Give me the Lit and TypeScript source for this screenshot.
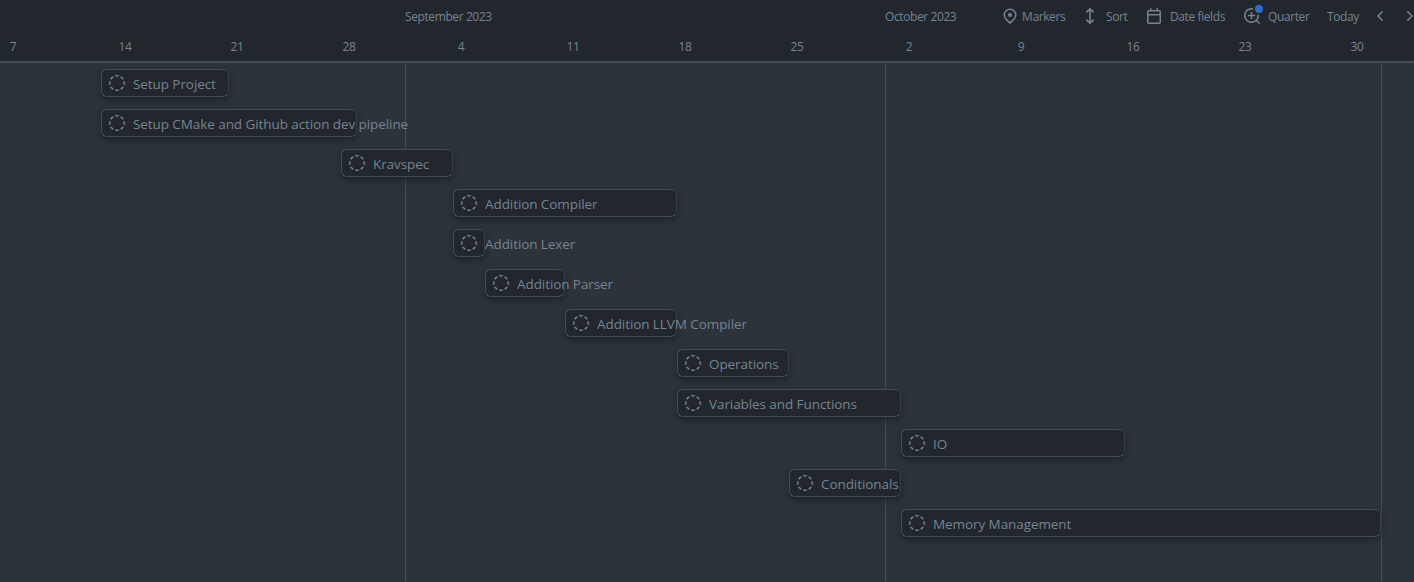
import { LitElement, html, svg, css } from "lit";
import { customElement, property } from "lit/decorators.js";

/** First day shown is Monday 7 August; every day is one 16px grid column. */
const WEEKS = [7, 14, 21, 28, 4, 11, 18, 25, 2, 9, 16, 23, 30];
const MONTH_STARTS = [26, 56, 87];
const MONTHS = [
  { name: "September 2023", column: 26 },
  { name: "October 2023", column: 56 },
];
const ITEMS = [
  { title: "Setup Project", start: 7, days: 8 },
  { title: "Setup CMake and Github action dev pipeline", start: 7, days: 16 },
  { title: "Kravspec", start: 22, days: 7 },
  { title: "Addition Compiler", start: 29, days: 14 },
  { title: "Addition Lexer", start: 29, days: 2 },
  { title: "Addition Parser", start: 31, days: 5 },
  { title: "Addition LLVM Compiler", start: 36, days: 7 },
  { title: "Operations", start: 43, days: 7 },
  { title: "Variables and Functions", start: 43, days: 14 },
  { title: "IO", start: 57, days: 14 },
  { title: "Conditionals", start: 50, days: 7 },
  { title: "Memory Management", start: 57, days: 30 },
];

const ICONS: Record<string, unknown> = {
  draft: svg`<path d="M14.307 11.655a.75.75 0 0 1 .165 1.048 8.05 8.05 0 0 1-1.769 1.77.75.75 0 0 1-.883-1.214 6.552 6.552 0 0 0 1.44-1.439.75.75 0 0 1 1.047-.165Zm-2.652-9.962a.75.75 0 0 1 1.048-.165 8.05 8.05 0 0 1 1.77 1.769.75.75 0 0 1-1.214.883 6.552 6.552 0 0 0-1.439-1.44.75.75 0 0 1-.165-1.047ZM6.749.097a8.074 8.074 0 0 1 2.502 0 .75.75 0 1 1-.233 1.482 6.558 6.558 0 0 0-2.036 0A.751.751 0 0 1 6.749.097ZM.955 6.125a.75.75 0 0 1 .624.857 6.558 6.558 0 0 0 0 2.036.75.75 0 1 1-1.482.233 8.074 8.074 0 0 1 0-2.502.75.75 0 0 1 .858-.624Zm14.09 0a.75.75 0 0 1 .858.624c.13.829.13 1.673 0 2.502a.75.75 0 1 1-1.482-.233 6.558 6.558 0 0 0 0-2.036.75.75 0 0 1 .624-.857Zm-13.352 5.53a.75.75 0 0 1 1.048.165 6.552 6.552 0 0 0 1.439 1.44.75.75 0 0 1-.883 1.212 8.05 8.05 0 0 1-1.77-1.769.75.75 0 0 1 .166-1.048Zm2.652-9.962A.75.75 0 0 1 4.18 2.74a6.556 6.556 0 0 0-1.44 1.44.751.751 0 0 1-1.212-.883 8.05 8.05 0 0 1 1.769-1.77.75.75 0 0 1 1.048.166Zm1.78 13.352a.75.75 0 0 1 .857-.624 6.558 6.558 0 0 0 2.036 0 .75.75 0 1 1 .233 1.482 8.074 8.074 0 0 1-2.502 0 .75.75 0 0 1-.624-.858Z"/>`,
  pin: svg`<path d="m12.596 11.596-3.535 3.536a1.5 1.5 0 0 1-2.122 0l-3.535-3.536a6.5 6.5 0 1 1 9.192-9.193 6.5 6.5 0 0 1 0 9.193Zm-1.06-8.132v-.001a5 5 0 1 0-7.072 7.072L8 14.07l3.536-3.534a5 5 0 0 0 0-7.072ZM8 9a2 2 0 1 1-.001-3.999A2 2 0 0 1 8 9Z"/>`,
  sort: svg`<path d="M8 1v14M4.4 4.4 8 .9l3.6 3.5M4.4 11.6 8 15.1l3.6-3.5" fill="none" stroke="currentColor" stroke-width="1.6"/>`,
  calendar: svg`<path d="M4.75 0a.75.75 0 0 1 .75.75V2h5V.75a.75.75 0 0 1 1.5 0V2h1.25c.966 0 1.75.784 1.75 1.75v10.5A1.75 1.75 0 0 1 13.25 16H2.75A1.75 1.75 0 0 1 1 14.25V3.75C1 2.784 1.784 2 2.75 2H4V.75A.75.75 0 0 1 4.75 0ZM2.5 7.5v6.75c0 .138.112.25.25.25h10.5a.25.25 0 0 0 .25-.25V7.5Zm10.75-4H2.75a.25.25 0 0 0-.25.25V6h11V3.75a.25.25 0 0 0-.25-.25Z"/>`,
  zoom: svg`<path d="M3.75 7.5a.75.75 0 0 1 .75-.75h2.25V4.5a.75.75 0 0 1 1.5 0v2.25h2.25a.75.75 0 0 1 0 1.5H8.25v2.25a.75.75 0 0 1-1.5 0V8.25H4.5a.75.75 0 0 1-.75-.75Z"/><path d="M7.5 0a7.5 7.5 0 0 1 5.807 12.247l2.473 2.473a.749.749 0 1 1-1.06 1.06l-2.473-2.473A7.5 7.5 0 1 1 7.5 0Zm-6 7.5a6 6 0 1 0 12 0 6 6 0 0 0-12 0Z"/>`,
  left: svg`<path d="M9.78 12.78a.75.75 0 0 1-1.06 0L4.47 8.53a.75.75 0 0 1 0-1.06l4.25-4.25a.751.751 0 0 1 1.06 1.06L6.06 8l3.72 3.72a.75.75 0 0 1 0 1.06Z"/>`,
  right: svg`<path d="M6.22 3.22a.75.75 0 0 1 1.06 0l4.25 4.25a.75.75 0 0 1 0 1.06l-4.25 4.25a.751.751 0 0 1-1.06-1.06L9.94 8 6.22 4.28a.75.75 0 0 1 0-1.06Z"/>`,
};

@customElement("app-icon")
class AppIcon extends LitElement {
  @property() name = "draft";
  static styles = css`
    :host { display: block; flex: none; width: 16px; height: 16px; }
    svg { display: block; width: 100%; height: 100%; fill: currentColor; }
  `;
  render() {
    return html`<svg viewBox="0 0 16 16" aria-hidden="true">${ICONS[this.name]}</svg>`;
  }
}

@customElement("roadmap-toolbar")
class RoadmapToolbar extends LitElement {
  static styles = css`
    :host {
      display: grid;
      grid-template-columns: 20px 60px 24px 40px 24px 74px 24px 59px 46px 28px 16px;
      align-items: center;
      height: 32px;
      white-space: nowrap;
    }
    .zoom { position: relative; width: 16px; }
    .dot {
      position: absolute;
      top: -5px;
      right: -5px;
      width: 8px;
      height: 8px;
      border: 2px solid #22272e;
      border-radius: 50%;
      background: #316dca;
    }
    .label { padding-top: 1px; }
  `;
  render() {
    return html`
      <app-icon name="pin"></app-icon><span class="label">Markers</span>
      <app-icon name="sort"></app-icon><span class="label">Sort</span>
      <app-icon name="calendar"></app-icon><span class="label">Date fields</span>
      <div class="zoom"><app-icon name="zoom"></app-icon><span class="dot"></span></div>
      <span class="label">Quarter</span>
      <span class="label">Today</span>
      <app-icon name="left"></app-icon><app-icon name="right"></app-icon>
    `;
  }
}

@customElement("app-root")
class AppRoot extends LitElement {
  static styles = css`
    :host {
      display: flex;
      flex-direction: column;
      height: 582px;
      overflow: hidden;
      background: #2d333b;
      color: #768390;
      font-family: "Open Sans", "Noto Sans", sans-serif;
      font-size: 12px;
    }
    .head {
      flex: none;
      height: 61px;
      background: #22272e;
      border-bottom: 2px solid #444c56;
      overflow: hidden;
      letter-spacing: -0.4px;
    }
    .days {
      display: grid;
      grid-template-columns: repeat(90, 16px);
      padding-left: 5px;
    }
    .months { height: 32px; line-height: 33px; }
    .months > * { grid-row: 1; white-space: nowrap; }
    .tools { grid-column: 63 / span 27; padding-left: 5px; line-height: 16px; }
    .weeks { height: 29px; line-height: 29px; letter-spacing: -0.25px; }
    .week { display: flex; justify-content: center; }
    .chart {
      flex: 1;
      grid-template-rows: repeat(12, 40px) 1fr;
      padding-top: 1px;
    }
    .rule { grid-row: 1 / -1; width: 1px; background: #444c56; }
    .bar {
      display: flex;
      align-items: center;
      box-sizing: border-box;
      height: 28px;
      margin-top: 5px;
      padding-left: 7px;
      gap: 8px;
      border: 1px solid #444c56;
      border-right-color: #373e47;
      border-radius: 6px;
      background: #22272e;
      box-shadow: 0 3px 6px rgba(28, 33, 40, 0.9);
      font-size: 13.5px;
      letter-spacing: -0.08px;
      white-space: nowrap;
      z-index: 1;
    }
    .title { line-height: 20px; padding-top: 2px; }
  `;
  render() {
    return html`
      <header class="head">
        <div class="days months">
          ${MONTHS.map((m) => html`<span style="grid-column: ${m.column} / span 8">${m.name}</span>`)}
          <roadmap-toolbar class="tools"></roadmap-toolbar>
        </div>
        <div class="days weeks">
          ${WEEKS.map((d, i) => html`<span class="week" style="grid-column: ${i * 7 + 1}">${d}</span>`)}
        </div>
      </header>
      <main class="days chart">
        ${MONTH_STARTS.map((c) => html`<div class="rule" style="grid-column: ${c}"></div>`)}
        ${ITEMS.map(
          (t, i) => html`<div class="bar" style="grid-area: ${i + 1} / ${t.start} / auto / span ${t.days}">
            <app-icon name="draft"></app-icon><span class="title">${t.title}</span>
          </div>`
        )}
      </main>
    `;
  }
}
